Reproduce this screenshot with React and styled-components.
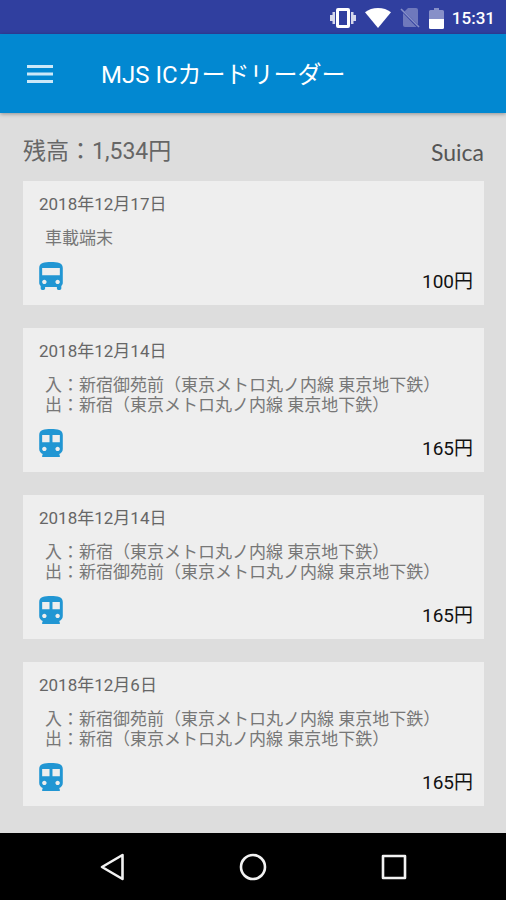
import React from "react";
import styled, { createGlobalStyle } from "styled-components";

const GlobalStyle = createGlobalStyle`
  *, *::before, *::after { box-sizing: border-box; }
  body {
    margin: 0;
    background: #dddddd;
    font-family: Roboto, "Noto Sans CJK JP", sans-serif;
    color: #666666;
  }
  h1, h2, p, ul { margin: 0; padding: 0; font-weight: 400; }
  button { border: 0; padding: 0; background: none; color: inherit; cursor: pointer; }
  svg { display: block; }
`;

const Screen = styled.div`
  min-height: 100vh;
  display: flex;
  flex-direction: column;
`;

const StatusBar = styled.div`
  height: 34px;
  padding: 2px 11px 0 0;
  display: flex;
  align-items: center;
  justify-content: flex-end;
  background: #303f9f;
  color: #ffffff;
`;

const StatusIcons = styled.div`
  display: flex;
  align-items: center;
  gap: 9px;
  margin-right: 8px;
`;

const Clock = styled.time`
  font-size: 17px;
  line-height: 20px;
  font-weight: 500;
`;

const AppBar = styled.header`
  height: 79px;
  padding: 0 26px;
  display: flex;
  align-items: center;
  gap: 47px;
  background: #0288d1;
  color: #ffffff;
  box-shadow: 0 1px 4px rgba(0, 0, 0, 0.35);
`;

const MenuButton = styled.button`
  width: 28px;
  height: 28px;
  display: grid;
  place-items: center;
  color: #cce8f8;
`;

const Title = styled.h1`
  padding-top: 2px;
  font-size: 24px;
  line-height: 32px;
`;

const Content = styled.main`
  flex: 1;
  padding: 23px 22px 27px 23px;
`;

const Summary = styled.div`
  display: flex;
  align-items: center;
  justify-content: space-between;
  height: 32px;
  margin-bottom: 13px;
`;

const Balance = styled.p`
  font-size: 23px;
  line-height: 32px;
`;

const CardName = styled.h2`
  font-family: Lato, sans-serif;
  font-size: 23px;
  line-height: 32px;
  color: #555555;
`;

const HistoryList = styled.ul`
  list-style: none;
  display: flex;
  flex-direction: column;
  gap: 23px;
`;

const Entry = styled.li`
  padding: 11px 11px 9px 16px;
  background: #eeeeee;
`;

const EntryDate = styled.time`
  display: block;
  font-size: 17px;
  line-height: 24px;
`;

const Details = styled.div`
  margin-top: 12px;
  padding-left: 6px;
  font-size: 17px;
  line-height: 20px;
  color: #777777;
`;

const EntryFooter = styled.div`
  display: flex;
  align-items: center;
  justify-content: space-between;
  height: 36px;
  margin-top: 12px;
`;

const Amount = styled.span`
  padding-top: 8px;
  font-size: 19px;
  line-height: 28px;
  color: #111111;
`;

const TransportIcon = styled.svg`
  width: 24px;
  height: 28px;
  margin-bottom: 4px;
  fill: #2196d3;
`;

const NavBar = styled.nav`
  height: 67px;
  padding: 0 42px;
  display: grid;
  grid-template-columns: repeat(3, 1fr);
  background: #000000;
  color: #f2f2f2;
`;

const NavButton = styled.button`
  display: grid;
  place-items: center;
`;

const transports = {
  bus: {
    label: "バス",
    path: "M4 16c0 .88.39 1.67 1 2.22V20c0 .55.45 1 1 1h1c.55 0 1-.45 1-1v-1h8v1c0 .55.45 1 1 1h1c.55 0 1-.45 1-1v-1.78c.61-.55 1-1.34 1-2.22V6c0-3.5-3.58-4-8-4s-8 .5-8 4v10zm3.5 1c-.83 0-1.5-.67-1.5-1.5S6.67 14 7.5 14s1.5.67 1.5 1.5S8.33 17 7.5 17zm9 0c-.83 0-1.5-.67-1.5-1.5s.67-1.5 1.5-1.5 1.5.67 1.5 1.5-.67 1.5-1.5 1.5zm1.5-6H6V6h12v5z",
  },
  train: {
    label: "電車",
    path: "M12 2c-4.42 0-8 .5-8 4v9.5c0 1.6.95 2.9 2.4 3.4L6 20.2v.8h12v-.8l-.4-1.3c1.45-.5 2.4-1.8 2.4-3.4V6c0-3.5-3.58-4-8-4zM7.5 17c-.83 0-1.5-.67-1.5-1.5S6.67 14 7.5 14s1.5.67 1.5 1.5S8.33 17 7.5 17zm3.5-6H6V6h5v5zm5.5 6c-.83 0-1.5-.67-1.5-1.5s.67-1.5 1.5-1.5 1.5.67 1.5 1.5-.67 1.5-1.5 1.5zm1.5-6h-5V6h5v5z",
  },
};

const LINE = "東京メトロ丸ノ内線 東京地下鉄";

const history = [
  { date: "2018年12月17日", iso: "2018-12-17", lines: ["車載端末"], type: "bus", amount: "100円" },
  {
    date: "2018年12月14日",
    iso: "2018-12-14",
    lines: [`入：新宿御苑前（${LINE}）`, `出：新宿（${LINE}）`],
    type: "train",
    amount: "165円",
  },
  {
    date: "2018年12月14日",
    iso: "2018-12-14",
    lines: [`入：新宿（${LINE}）`, `出：新宿御苑前（${LINE}）`],
    type: "train",
    amount: "165円",
  },
  {
    date: "2018年12月6日",
    iso: "2018-12-06",
    lines: [`入：新宿御苑前（${LINE}）`, `出：新宿（${LINE}）`],
    type: "train",
    amount: "165円",
  },
];

function VibrateIcon() {
  return (
    <svg width="26" height="20" viewBox="0 0 26 20" fill="currentColor" aria-hidden="true">
      <path fillRule="evenodd" d="M8 0h10a2 2 0 0 1 2 2v16a2 2 0 0 1-2 2H8a2 2 0 0 1-2-2V2a2 2 0 0 1 2-2zm1 3v14h8V3z" />
      <path opacity=".8" d="M2.500 4H5v12H2.500zM0 7h2.500v6H0zM21 4h2.500v12H21zM23.500 7H26v6h-2.500z" />
    </svg>
  );
}

function WifiIcon() {
  return (
    <svg width="26" height="20" viewBox="0 0 26 20" fill="currentColor" aria-hidden="true">
      <path d="M13 20 0 4.2C3.500 1.500 8 0 13 0s9.500 1.500 13 4.200z" />
    </svg>
  );
}

function NoSimIcon() {
  return (
    <svg width="20" height="20" viewBox="0 0 20 20" aria-hidden="true">
      <path d="M8 0h8a2 2 0 0 1 2 2v14.500L4.500 3.500z" fill="#6f79bc" />
      <path d="M3 5v12a2 2 0 0 0 2 2h11.500z" fill="#6f79bc" />
      <path d="m1 1 18 18" stroke="#8790c8" strokeWidth="1.600" />
    </svg>
  );
}

function BatteryIcon() {
  return (
    <svg width="15" height="21" viewBox="0 0 15 21" aria-hidden="true">
      <path d="M5 0h5v2h3.500A1.500 1.500 0 0 1 15 3.500V11H0V3.500A1.500 1.500 0 0 1 1.500 2H5z" fill="#8790c8" />
      <path d="M0 11h15v8.500a1.500 1.500 0 0 1-1.500 1.500h-12A1.500 1.500 0 0 1 0 19.500z" fill="#fff" />
    </svg>
  );
}

function HistoryEntry({ entry }) {
  const transport = transports[entry.type];
  return (
    <Entry>
      <EntryDate dateTime={entry.iso}>{entry.date}</EntryDate>
      <Details>
        {entry.lines.map((line) => (
          <p key={line}>{line}</p>
        ))}
      </Details>
      <EntryFooter>
        <TransportIcon viewBox="4 2 16 19" role="img" aria-label={transport.label}>
          <path d={transport.path} />
        </TransportIcon>
        <Amount>{entry.amount}</Amount>
      </EntryFooter>
    </Entry>
  );
}

export default function App() {
  return (
    <Screen>
      <GlobalStyle />
      <StatusBar>
        <StatusIcons>
          <VibrateIcon />
          <WifiIcon />
          <NoSimIcon />
          <BatteryIcon />
        </StatusIcons>
        <Clock>15:31</Clock>
      </StatusBar>
      <AppBar>
        <MenuButton type="button" aria-label="メニュー">
          <svg width="26" height="18" viewBox="0 0 26 18" stroke="currentColor" strokeWidth="3" aria-hidden="true">
            <path d="M0 1.500h26M0 9h26M0 16.500h26" />
          </svg>
        </MenuButton>
        <Title>MJS ICカードリーダー</Title>
      </AppBar>
      <Content>
        <Summary>
          <Balance>残高：1,534円</Balance>
          <CardName>Suica</CardName>
        </Summary>
        <HistoryList>
          {history.map((entry, index) => (
            <HistoryEntry key={index} entry={entry} />
          ))}
        </HistoryList>
      </Content>
      <NavBar>
        <NavButton type="button" aria-label="戻る">
          <svg width="26" height="28" viewBox="0 0 26 28" fill="none" stroke="currentColor" strokeWidth="2.600" strokeLinejoin="round" aria-hidden="true">
            <path d="M23.500 2v24L3 14z" />
          </svg>
        </NavButton>
        <NavButton type="button" aria-label="ホーム">
          <svg width="28" height="28" viewBox="0 0 28 28" fill="none" stroke="currentColor" strokeWidth="2.600" aria-hidden="true">
            <circle cx="14" cy="14" r="12" />
          </svg>
        </NavButton>
        <NavButton type="button" aria-label="最近使ったアプリ">
          <svg width="26" height="26" viewBox="0 0 26 26" fill="none" stroke="currentColor" strokeWidth="2.600" strokeLinejoin="round" aria-hidden="true">
            <path d="M2 2h22v22H2z" />
          </svg>
        </NavButton>
      </NavBar>
    </Screen>
  );
}
